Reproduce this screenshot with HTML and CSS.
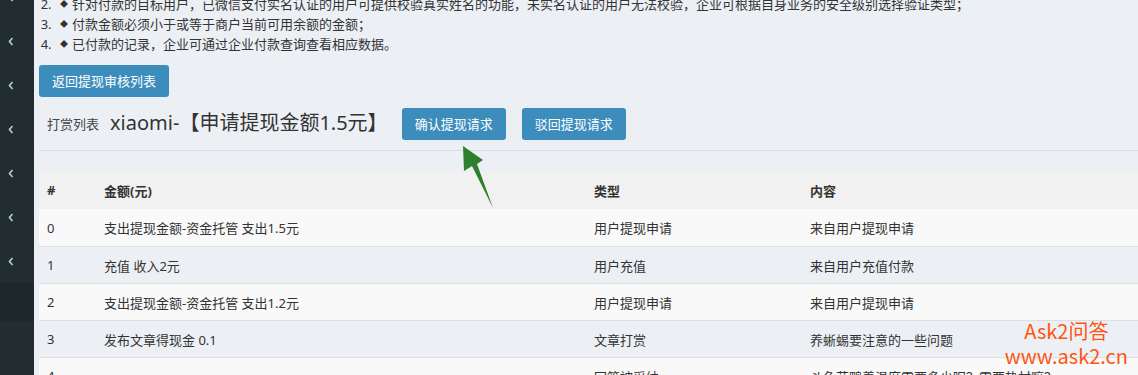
FILE: index.html
```html
<!DOCTYPE html>
<html lang="zh-CN">

<head>
    <meta charset="UTF-8">
    <meta name="viewport" content="width=device-width, initial-scale=1.0">
    <title>打赏列表</title>
    <link rel="stylesheet" href="styles.css">
</head>

<body>

    <aside class="sidebar">
        <ul class="side-menu">
            <li><svg width="6" height="9" viewBox="0 0 6 9"><polyline points="4.5,1 1.5,4.5 4.5,8" /></svg></li>
            <li><svg width="6" height="9" viewBox="0 0 6 9"><polyline points="4.5,1 1.5,4.5 4.5,8" /></svg></li>
            <li><svg width="6" height="9" viewBox="0 0 6 9"><polyline points="4.5,1 1.5,4.5 4.5,8" /></svg></li>
            <li><svg width="6" height="9" viewBox="0 0 6 9"><polyline points="4.5,1 1.5,4.5 4.5,8" /></svg></li>
            <li><svg width="6" height="9" viewBox="0 0 6 9"><polyline points="4.5,1 1.5,4.5 4.5,8" /></svg></li>
            <li><svg width="6" height="9" viewBox="0 0 6 9"><polyline points="4.5,1 1.5,4.5 4.5,8" /></svg></li>
            <li><svg width="6" height="9" viewBox="0 0 6 9"><polyline points="4.5,1 1.5,4.5 4.5,8" /></svg></li>
            <li class="active"></li>
        </ul>
    </aside>

    <main class="content">
        <ol class="notes" start="2">
            <li><span class="dot">◆</span>针对付款的目标用户，已微信支付实名认证的用户可提供校验真实姓名的功能，未实名认证的用户无法校验，企业可根据自身业务的安全级别选择验证类型；</li>
            <li><span class="dot">◆</span>付款金额必须小于或等于商户当前可用余额的金额；</li>
            <li><span class="dot">◆</span>已付款的记录，企业可通过企业付款查询查看相应数据。</li>
        </ol>

        <a class="btn" href="#">返回提现审核列表</a>

        <div class="box">
            <div class="box-header">
                <span class="box-label">打赏列表</span>
                <h3 class="box-title">xiaomi-【申请提现金额1.5元】</h3>
                <a class="btn btn-confirm" href="#">确认提现请求</a>
                <a class="btn" href="#">驳回提现请求</a>
            </div>
        </div>

        <table class="data">
            <colgroup>
                <col class="c-id">
                <col class="c-amount">
                <col class="c-type">
                <col>
            </colgroup>
            <thead>
                <tr>
                    <th>#</th>
                    <th>金额(元)</th>
                    <th>类型</th>
                    <th>内容</th>
                </tr>
            </thead>
            <tbody>
                <tr>
                    <td>0</td>
                    <td>支出提现金额-资金托管 支出1.5元</td>
                    <td>用户提现申请</td>
                    <td>来自用户提现申请</td>
                </tr>
                <tr>
                    <td>1</td>
                    <td>充值 收入2元</td>
                    <td>用户充值</td>
                    <td>来自用户充值付款</td>
                </tr>
                <tr>
                    <td>2</td>
                    <td>支出提现金额-资金托管 支出1.2元</td>
                    <td>用户提现申请</td>
                    <td>来自用户提现申请</td>
                </tr>
                <tr>
                    <td>3</td>
                    <td>发布文章得现金 0.1</td>
                    <td>文章打赏</td>
                    <td>养蜥蜴要注意的一些问题</td>
                </tr>
                <tr>
                    <td>4</td>
                    <td></td>
                    <td>回答被采纳</td>
                    <td>斗鱼花鸭养温度需要多少呢？需要热材嘛？</td>
                </tr>
            </tbody>
        </table>
    </main>

    <svg class="arrow" width="40" height="70" viewBox="0 0 40 70">
        <polygon points="3,1 4,26 12,21 33,63 17,19 23,15" />
    </svg>

    <div class="watermark">
        <span>Ask2问答</span>
        <span>www.ask2.cn</span>
    </div>

</body>

</html>
```

FILE: styles.css
```css
body,
html {
    margin: 0;
    padding: 0;
}

body {
    display: flex;
    height: 375px;
    overflow: hidden;
    background-color: #ecf0f5;
    color: #333;
    font-family: "Noto Sans", "Noto Sans CJK SC", sans-serif;
    font-size: 13px;
}

.sidebar {
    width: 34px;
    flex-shrink: 0;
    background-color: #222d32;
}

.side-menu {
    list-style: none;
    margin: -25px 0 0 0;
    padding: 0;
}

.side-menu li {
    height: 44px;
    display: flex;
    align-items: center;
    padding-left: 8px;
}

.side-menu li.active {
    height: 38px;
    background-color: #1e282c;
}

.side-menu svg polyline {
    fill: none;
    stroke: #b8c7ce;
    stroke-width: 1.7;
}

.content {
    flex: 1;
    padding-left: 5px;
    min-width: 0;
}

.notes {
    margin: -6px 0 11px 0;
    padding-left: 16px;
    line-height: 20px;
    font-size: 13px;
    white-space: nowrap;
}

.notes li {
    padding-left: 5px;
}

.notes .dot {
    font-size: 8px;
    vertical-align: 2px;
    margin-right: 4px;
}

.btn {
    display: inline-block;
    box-sizing: border-box;
    height: 32px;
    padding: 0 13px;
    line-height: 32px;
    background-color: #3c8dbc;
    color: #fff;
    text-decoration: none;
    border-radius: 3px;
    font-size: 13px;
}

.box {
    border-bottom: 1px solid #d8dbe0;
}

.box-header {
    display: flex;
    align-items: center;
    height: 53px;
    padding-left: 8px;
}

.box-label {
    font-size: 13px;
    color: #444;
}

.box-title {
    margin: 0 14px 0 11px;
    font-size: 20px;
    font-weight: normal;
    color: #333;
    position: relative;
    top: -2px;
}

.btn-confirm {
    margin-right: 16px;
}

.data {
    margin-top: 20px;
    width: 100%;
    border-collapse: collapse;
    table-layout: fixed;
}

.c-id {
    width: 57px;
}

.c-amount {
    width: 490px;
}

.c-type {
    width: 216px;
}

.data th,
.data td {
    text-align: left;
    padding: 0 0 0 8px;
    white-space: nowrap;
    overflow: hidden;
}

.data th {
    height: 38px;
    background-color: #f1f1f1;
    font-weight: bold;
}

.data td {
    height: 36px;
    border-top: 1px solid #dcdfe3;
}

.data tbody tr:first-child td {
    border-top: 0;
    height: 37px;
}

.data tbody tr:nth-child(odd) {
    background-color: #f9f9f9;
}

.arrow {
    position: absolute;
    left: 460px;
    top: 145px;
}

.arrow polygon {
    fill: #2e7f2e;
}

.watermark {
    position: absolute;
    right: 10px;
    top: 318px;
    display: flex;
    flex-direction: column;
    align-items: center;
    color: #ff5511;
    font-family: "Noto Sans CJK SC", sans-serif;
    font-size: 20px;
    line-height: 25px;
}
```
